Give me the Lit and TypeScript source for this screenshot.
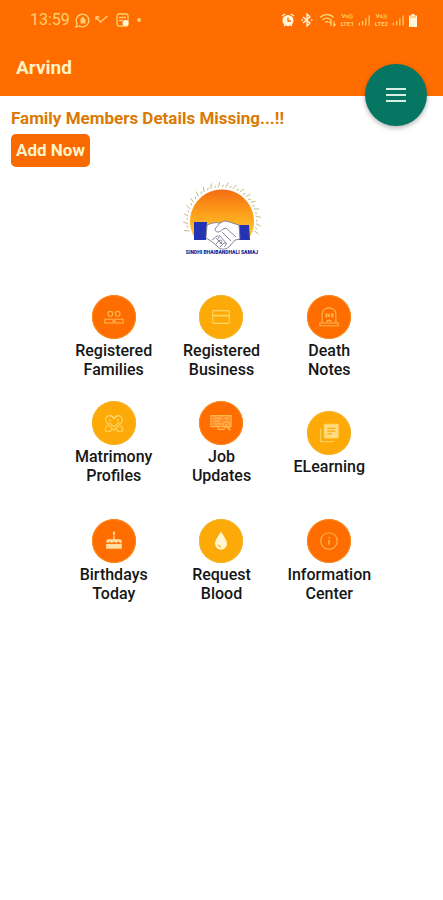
import { LitElement, html, svg, css, type SVGTemplateResult } from "lit";
import { customElement } from "lit/decorators.js";
import { classMap } from "lit/directives/class-map.js";

interface Tile {
  lines: string[];
  amber: boolean;
  icon: SVGTemplateResult;
}

// Tile icons, drawn on a 24 x 24 grid
const families = svg`
  <circle cx="8" cy="8.5" r="2.6"/><circle cx="16" cy="8.5" r="2.6"/>
  <path d="M2 14.5h9v4h-9zM13 14.5h9v4h-9zM11 16.500h2"/>`;
const card = svg`
  <rect x="3" y="5" width="18" height="14" rx="1"/>
  <path class="bold" d="M3 10.500h18"/>`;
const grave = svg`
  <path d="M4.500 18V8.500c0-3.500 3-6.500 7.500-6.500s7.500 3 7.500 6.500V18M2 18.500h20v3H2z"/>
  <path class="bold" d="M8 9h1.500v2.500H8M12 8.500V12M14 9h2v2.500h-2M9.500 17c1-2 4-2 5 0"/>`;
const heart = svg`
  <path d="M12 7C10 3 4.500 3 3 7c-1 3 1 5 3 7l6 6 6-6c2-2 4-4 3-7-1.500-4-7-4-9 0z"/>
  <path d="M6 11l6 5 6-5M8 4l4 3 4-3M5 15c-3 2-3 5-2 6h5l2-3M19 15c3 2 3 5 2 6h-5l-2-3M7 8l2 2M17 8l-2 2"/>`;
const job = svg`
  <path class="tint" d="M1 4h22v12H1z"/>
  <path d="M4 7h9M4 10h7M4 13h9M16 7h4M9 16v3h7"/>
  <circle cx="18" cy="14" r="3.500"/><path class="bold" d="M18 13v2M20 17l2 3"/>`;
const library = svg`
  <path d="M3 7v14.500h14.500"/>
  <rect class="veil" x="7" y="2.500" width="15" height="15" rx="1"/>
  <path class="mark" d="M10 7h9M10 10h9M10 13h5"/>`;
const cake = svg`
  <path class="fill" d="M11.300 6h1.400v4h5.300c1.500 0 2.500 1 2.500 2.200v1.300c-1 .8-2 .6-2.900-.2l-1-.8-1 .8c-1 1-2 .9-2.900 0l-.8-.8-.9.8c-1 .9-2 1-2.900 0l-.9-.8-1 .8c-.8.8-1.500.9-2.400.2v-1.300C3.400 11 4.400 10 6 10h5.300zM3.400 15c1.200.6 2.400.4 3.400-.4 1.400 1.200 3 1.200 4.300 0 1 .9 2.500 1 3.700 0 1.300 1.200 3 1.100 4 0 .5.400 1 .6 1.700.4V20.500H3.400z"/>
  <ellipse class="fill" cx="12" cy="3.500" rx="1.100" ry="2.200"/>`;
const drop = svg`
  <path class="fill" d="M12 1c2 5 6.500 9 6.500 14a6.500 6.500 0 0 1-13 0C5.500 10 10 6 12 1z"/>
  <path class="mark" d="M9 16c.5 1.500 1.500 2.300 3 2.500"/>`;
const info = svg`
  <circle cx="12" cy="12" r="9"/>
  <path class="bold" d="M12 11v5M12 7.500v1.500"/>`;

const TILES: Tile[] = [
  { lines: ["Registered", "Families"], amber: false, icon: families },
  { lines: ["Registered", "Business"], amber: true, icon: card },
  { lines: ["Death", "Notes"], amber: false, icon: grave },
  { lines: ["Matrimony", "Profiles"], amber: true, icon: heart },
  { lines: ["Job", "Updates"], amber: false, icon: job },
  { lines: ["ELearning"], amber: true, icon: library },
  { lines: ["Birthdays", "Today"], amber: false, icon: cake },
  { lines: ["Request", "Blood"], amber: true, icon: drop },
  { lines: ["Information", "Center"], amber: false, icon: info },
];

// Sun rays: short ticks fanned around the upper part of the disc
const RAYS = Array.from({ length: 35 }, (_, i) => {
  const a = ((-197 + (i * 214) / 34) * Math.PI) / 180;
  const b = a + 0.05;
  const outer = i % 2 ? 36 : 39;
  return svg`<line x1=${40 + 34 * Math.cos(a)} y1=${40 + 34 * Math.sin(a)}
    x2=${40 + outer * Math.cos(b)} y2=${40 + outer * Math.sin(b)}/>`;
});

@customElement("app-root")
export class AppRoot extends LitElement {
  static styles = css`
    :host {
      display: block;
      min-height: 100vh;
      background: #fff;
      color: #161616;
      font-family: Roboto, "Liberation Sans", sans-serif;
    }
    .header {
      position: relative;
      background: #ff6d00;
      color: #fff3c4;
    }
    .status {
      display: flex;
      align-items: center;
      justify-content: space-between;
      height: 40px;
      padding: 0 26px 0 30px;
      color: #ffd070;
    }
    .group {
      display: flex;
      align-items: center;
      gap: 5px;
    }
    .time {
      font-size: 16px;
      line-height: 20px;
    }
    .status svg {
      display: block;
      fill: none;
      stroke: currentColor;
      stroke-width: 1.3;
    }
    .status .solid {
      fill: currentColor;
      stroke: none;
    }
    .status .white {
      color: #fff6dc;
    }
    .lte {
      display: flex;
      flex-direction: column;
      align-items: center;
      font-size: 6px;
      line-height: 8px;
      font-weight: 700;
    }
    .sim {
      display: flex;
      align-items: center;
      gap: 4px;
    }
    .title {
      margin: 0;
      padding: 16px;
      font-size: 19px;
      line-height: 24px;
      font-weight: 700;
    }
    .menu {
      position: absolute;
      right: 16px;
      bottom: -30px;
      display: grid;
      place-items: center;
      width: 62px;
      height: 62px;
      padding: 0;
      border: 0;
      border-radius: 50%;
      background: #067562;
      box-shadow: 0 2px 5px rgba(0, 0, 0, 0.3);
    }
    .menu svg {
      stroke: #d5efe4;
      stroke-width: 2;
    }
    .notice {
      padding: 11px 11px 0;
    }
    .warning {
      margin: 0 0 5px;
      color: #d97a04;
      font-size: 17px;
      line-height: 22px;
      font-weight: 700;
    }
    .add {
      display: block;
      padding: 0 5px;
      border: 0;
      border-radius: 5px;
      background: #f96b00;
      color: #fff3cc;
      font: 700 17px/33px Roboto, "Liberation Sans", sans-serif;
    }
    .logo {
      display: block;
      margin: 14px auto 36px;
    }
    .rays {
      stroke: #c9b98a;
      stroke-width: 1;
    }
    .caption {
      fill: #20208e;
      font-family: Roboto, sans-serif;
      font-size: 5px;
      font-weight: 900;
      text-anchor: middle;
    }
    .grid {
      display: grid;
      grid-template-columns: repeat(3, 1fr);
      align-items: center;
      width: 73%;
      margin: 0 auto;
      row-gap: 22px;
    }
    .tile {
      display: flex;
      flex-direction: column;
      align-items: center;
      gap: 2px;
      padding: 0;
      border: 0;
      background: none;
      color: inherit;
      font: 500 16px/19px Roboto, "Liberation Sans", sans-serif;
    }
    .tile.last {
      margin-top: 12px;
    }
    .disc {
      display: grid;
      place-items: center;
      width: 44px;
      height: 44px;
      border-radius: 50%;
      background: #ff6d00;
      box-shadow: inset 0 0 0 1px #f98a1c;
    }
    .disc.amber {
      background: #fdaa08;
      box-shadow: inset 0 0 0 1px #f3b52c;
    }
    .disc svg {
      fill: none;
      stroke: #ffb850;
      stroke-width: 1.2;
    }
    .disc.amber svg {
      stroke: #ffd668;
    }
    .disc .bold {
      stroke-width: 1.8;
    }
    .disc .tint {
      fill: #ff8f2c;
    }
    .disc .veil {
      fill: #ffdc80;
    }
    .disc .fill {
      fill: #ffe0a0;
      stroke: none;
    }
    .disc.amber .fill {
      fill: #fff6d2;
    }
    .disc .mark {
      stroke: #fdaa08;
    }
    .label {
      display: flex;
      flex-direction: column;
      align-items: center;
    }
  `;

  private bars() {
    return html`<svg width="12" height="12" viewBox="0 0 13 12">
      <path d="M1.500 12V9M5 12V7M8.500 12V4M12 12V1" />
    </svg>`;
  }

  private sim(n: number) {
    return html`<div class="sim">
      <div class="lte"><span>Vo))</span><span>LTE${n}</span></div>
      ${this.bars()}
    </div>`;
  }

  private statusBar() {
    return html`<div class="status">
      <div class="group">
        <span class="time">13:59</span>
        <svg width="15" height="15" viewBox="0 0 15 15">
          <path d="M1 14l1-3.500A6.300 6.300 0 1 1 4.500 13z" />
          <path class="solid" d="M7.500 3.500l3 3v4h-5v-4z" />
        </svg>
        <svg width="14" height="12" viewBox="0 0 14 12">
          <path d="M1 3l4.500 5L12.500 2M1 6V3h3.500" />
        </svg>
        <svg width="16" height="14" viewBox="0 0 16 14">
          <rect x="3" y="1" width="11" height="12" rx="2" />
          <path d="M5 4.500h7M5 7.500h4" />
          <circle class="solid white" cx="11.500" cy="10" r="3" />
        </svg>
        <svg width="10" height="6" viewBox="0 0 10 6">
          <circle class="solid" cx="4" cy="3" r="2" />
        </svg>
      </div>
      <div class="group">
        <svg class="white" width="14" height="14" viewBox="0 0 14 14">
          <circle class="solid" cx="7" cy="7.500" r="5.500" />
          <path d="M1 3l3-2M13 3l-3-2M3 13l1-1M11 13l-1-1" />
          <path stroke="#ff6d00" d="M7 4.500V8h3" />
        </svg>
        <svg class="white" width="14" height="14" viewBox="0 0 14 14">
          <path d="M3 4l7 6-3 3V1l3 3-7 6M1.500 7h1.500M11 7h1.500" />
        </svg>
        <svg width="17" height="14" viewBox="0 0 17 14">
          <path d="M1 4.500c4-4 10-4 13.500 0M3.500 7c2.500-2.500 6-2.500 8.500 0M6 9.500c1-1 2.500-1 3.500 0M12 13V8l-1.500 2M15 8v5l1.500-2" />
        </svg>
        ${this.sim(1)} ${this.sim(2)}
        <svg class="white" width="8" height="13" viewBox="0 0 8 13">
          <path class="solid" d="M2.500 0h3v1.500H8V13H0V1.500h2.500z" />
          <path stroke="#ffc461" d="M1 3h6" />
        </svg>
      </div>
    </div>`;
  }

  private logo() {
    return html`<svg class="logo" width="80" height="78" viewBox="0 0 80 78" role="img" aria-label="Samaj logo">
      <defs>
        <linearGradient id="sun" x1="0" y1="0" x2="0" y2="1">
          <stop offset="0" stop-color="#f36c12" />
          <stop offset="0.450" stop-color="#fc9a18" />
          <stop offset="1" stop-color="#fdca2e" />
        </linearGradient>
      </defs>
      <g class="rays">${RAYS}</g>
      <path fill="url(#sun)" d="M11.500 55A32 32 0 1 1 68.500 55z" />
      <path fill="#fff" d="M25 55h31v14H25z" />
      <path fill="#2433b4" d="M12 41h13l-1 18H12z" />
      <path fill="#2433b4" d="M57 44h10l1 15H57z" />
      <g fill="#fff" stroke="#777c95" stroke-width="0.900" stroke-linejoin="round">
        <path d="M25 44c5-2 8-3 13-2l4-2c5 0 10 3 15 4l1 14-5 1-6 7c-4 3-9 3-12-1l-6-5-5-3z" />
        <path fill="none" d="M38 42l-5 6c0 4 5 4 8 0l3-1 10 9M40 51l9 9M37 54l8 9M34 57l6 6M30 59l5-4c3 0 2 3 0 4M34 63l4-4c3 0 2 3 0 4M38 66l4-4c3 0 2 3 0 4" />
      </g>
      <text class="caption" x="40" y="73">SINDHI BHAIBANDHALI SAMAJ</text>
    </svg>`;
  }

  render() {
    return html`
      <header class="header">
        ${this.statusBar()}
        <h1 class="title">Arvind</h1>
        <button class="menu" aria-label="Menu">
          <svg width="20" height="14" viewBox="0 0 20 14">
            <path d="M0 1h20M0 7h20M0 13h20" />
          </svg>
        </button>
      </header>
      <main>
        <section class="notice">
          <p class="warning">Family Members Details Missing...!!</p>
          <button class="add">Add Now</button>
        </section>
        ${this.logo()}
        <nav class="grid">
          ${TILES.map(
            (t, i) => html`<button class=${classMap({ tile: true, last: i > 5 })}>
              <span class=${classMap({ disc: true, amber: t.amber })}>
                <svg width="22" height="22" viewBox="0 0 24 24">${t.icon}</svg>
              </span>
              <span class="label">${t.lines.map((l) => html`<span>${l}</span>`)}</span>
            </button>`
          )}
        </nav>
      </main>
    `;
  }
}
